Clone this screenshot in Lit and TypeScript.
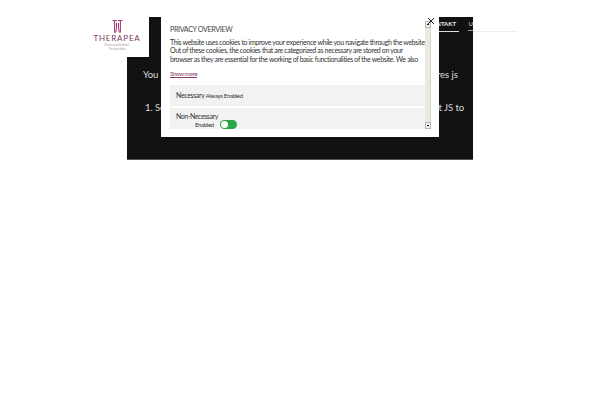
import { LitElement, html, css } from "lit";
import { customElement } from "lit/decorators.js";

@customElement("app-root")
export class AppRoot extends LitElement {
  static styles = css`
    :host { display: block; width: 600px; height: 400px; background: #fff; overflow: hidden; position: relative; font-family: "Lato", "Noto Sans", sans-serif; }
    .page { display: flex; flex-direction: column; padding-top: 17px; }
    .head { display: flex; margin-left: 85px; height: 40px; }
    .logo { width: 64px; display: flex; flex-direction: column; align-items: center; padding-top: 3px; box-sizing: border-box; }
    .logo svg { display: block; }
    .brand { font-size: 8px; line-height: 9px; letter-spacing: 0.8px; color: #7d3a62; margin-top: 1px; }
    .tag { font-size: 3px; line-height: 3px; color: #a99aa3; margin-top: 1px; white-space: nowrap; }
    .nav { width: 324px; background: #111; display: flex; justify-content: flex-end; gap: 9px; padding-top: 3px; box-sizing: border-box; }
    .nav span { font-weight: 700; font-size: 6px; line-height: 8px; color: #eee; height: 11px; }
    .nav .k { width: 30px; text-align: right; padding-right: 3px; border-bottom: 1px solid #ddd; }
    .nav .u { width: 5px; box-sizing: border-box; padding-left: 0.5px; color: #aaa; border-bottom: 1px solid #999; }
    .rule { width: 44px; height: 1px; margin-top: 14px; background: #eee; }
    .main { margin-left: 127px; width: 346px; height: 103px; box-sizing: border-box; background: #111; color: #ddd; font-size: 9.5px; padding: 11px 16px 0; border-bottom: 1px solid #555; white-space: nowrap; }
    .main p { margin: 0; line-height: 13px; letter-spacing: -0.08px; }
    .main ol { margin: 20px 0 0; padding: 0 0 0 2px; list-style: none; line-height: 13px; letter-spacing: -0.065px; }
    .modal { position: absolute; left: 161px; top: 17px; width: 278px; height: 120px; box-sizing: border-box; background: #fff; padding: 8px 14px 0 9px; color: #333; font-size: 7px; letter-spacing: -0.35px; }
    .title { font-size: 7.2px; line-height: 10px; color: #444; margin-bottom: 3px; letter-spacing: -0.38px; }
    .desc { margin: 0; width: 256px; height: 25px; line-height: 8.3px; color: #333; white-space: nowrap; }
    .more { display: block; color: #8c3a6b; text-decoration: underline; font-size: 6.3px; letter-spacing: -0.45px; line-height: 9px; margin: 6px 0 7px; width: max-content; }
    .row { width: 255px; background: #f2f2f2; color: #333; margin-bottom: 2px; box-sizing: border-box; }
    .row.a { height: 21px; line-height: 21px; padding-left: 6px; }
    .row.b { height: 21px; padding: 5px 0 0 6px; display: flex; align-items: flex-end; }
    .small { font-size: 6px; letter-spacing: -0.3px; }
    .stack { display: flex; flex-direction: column; align-items: flex-end; line-height: 7.5px; padding-bottom: 1px; letter-spacing: -0.42px; }
    .stack .small { margin-right: 4px; }
    .toggle { width: 17px; height: 9px; border-radius: 5px; background: #28a745; margin-left: 2px; position: relative; }
    .toggle::after { content: ""; position: absolute; left: 1px; top: 1px; width: 7px; height: 7px; border-radius: 50%; background: #fff; }
    .bar { position: absolute; left: 264px; top: 4px; width: 6px; height: 108px; background: #ece9e3; border-right: 1px solid #d8d4cc; box-sizing: border-box; }
    .btn { position: absolute; left: 0; width: 6px; height: 7px; background: #eee; border: 1px solid #b8b5ae; box-sizing: border-box; }
    .btn.up { top: 0; }
    .btn.down { bottom: 0; }
    .btn::after { content: ""; position: absolute; left: 1px; top: 2px; width: 2px; height: 1px; background: #111; }
    .close { position: absolute; left: 265px; top: -1px; width: 10px; height: 10px; }
  `;

  render() {
    return html`
      <div class="page">
        <header class="head">
          <div class="logo">
            <svg width="11" height="13" viewBox="0 0 11 13" fill="none" stroke="#a3316f" stroke-width="1">
              <path d="M0.5 .6H5M2.6 .6V12.6M6 .6H10.5M8.4 .6V12.6M4.6 3Q4.7 9 3.6 12.6M6.4 3Q6.3 9 7.4 12.6" />
            </svg>
            <div class="brand">THERAPEA</div>
            <div class="tag">Businessclub Hotel</div>
            <div class="tag">Therapeutika</div>
          </div>
          <nav class="nav"><span class="k">KONTAKT</span><span class="u">U</span></nav>
          <div class="rule"></div>
        </header>
        <main class="main">
          <p>You have to enable JavaScript in your web browser as this web site requires js</p>
          <ol><li>1. Select your web browser settings and then switch on the option about JS to</li></ol>
        </main>
      </div>
      <section class="modal">
        <div class="title">PRIVACY OVERVIEW</div>
        <p class="desc">This website uses cookies to improve your experience while you navigate through the website.<br />Out of these cookies, the cookies that are categorized as necessary are stored on your<br />browser as they are essential for the working of basic functionalities of the website. We also</p>
        <a class="more">Show more</a>
        <div class="row a">Necessary <span class="small">Always Enabled</span></div>
        <div class="row b">
          <div class="stack"><span>Non-Necessary</span><span class="small">Enabled</span></div>
          <div class="toggle"></div>
        </div>
        <div class="bar"><div class="btn up"></div><div class="btn down"></div></div>
        <svg class="close" viewBox="0 0 10 10" stroke="#222" stroke-width="1"><path d="M2 2L8 8M8 2L2 8" /></svg>
      </section>
    `;
  }
}
